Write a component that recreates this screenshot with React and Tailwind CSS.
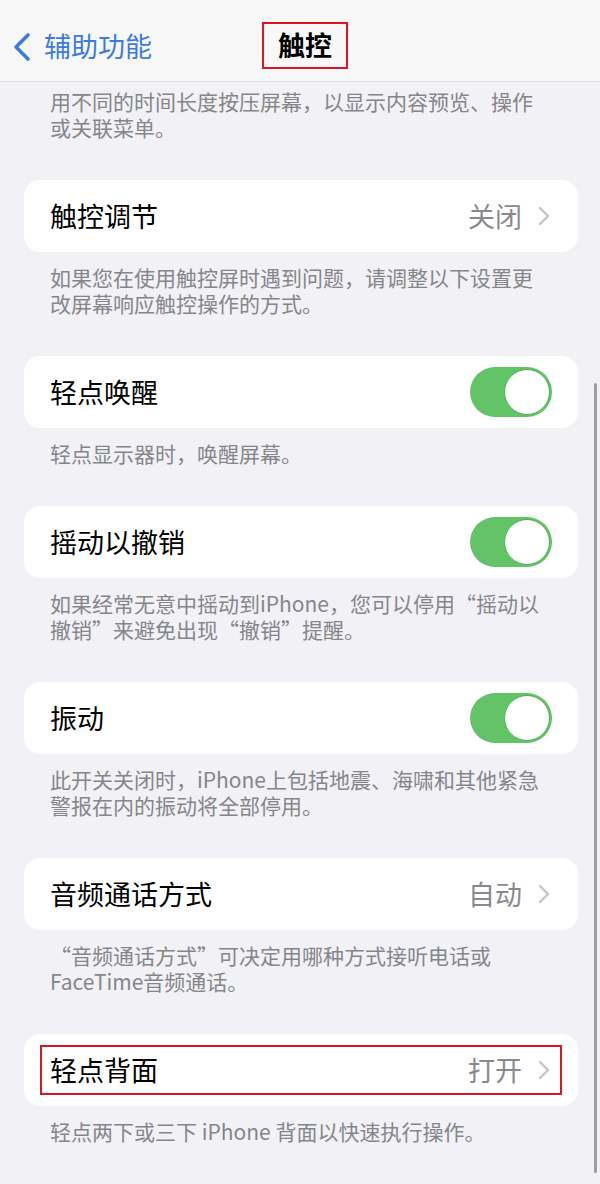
import React from "react";

const font = { fontFamily: '"Noto Sans CJK SC", "Noto Sans", sans-serif' };

const Toggle = () => (
  <div className="w-[82px] h-[50px] rounded-full bg-[#62c466] p-[2px] flex justify-end">
    <div className="w-[46px] h-[46px] rounded-full bg-white border border-[#4fae55]" />
  </div>
);

const Chevron = () => (
  <svg width="12" height="20" viewBox="0 0 12 20" className="ml-[16px]">
    <path d="M2 2 L10 10 L2 18" fill="none" stroke="#c5c5c8" strokeWidth="2.4" strokeLinecap="round" strokeLinejoin="round" />
  </svg>
);

const Card = ({ label, value, toggle, boxed }) => (
  <div className="mx-[24px] mr-[22px] h-[72px] rounded-[16px] bg-white flex items-center px-[16px]">
    <div
      className={
        "flex-1 h-[50px] flex items-center pl-[8px] pr-[10px] border-2 " +
        (boxed ? "border-[#e0141e]" : "border-transparent")
      }
    >
      <span className="flex-1 text-[27px] text-black">{label}</span>
      {toggle ? (
        <div className="-mr-[2px]">
          <Toggle />
        </div>
      ) : (
        <>
          <span className="text-[27px] text-[#8a8a8e]">{value}</span>
          <Chevron />
        </>
      )}
    </div>
  </div>
);

const Note = ({ children, first }) => (
  <p
    className={
      "pl-[50px] pr-[50px] pb-[40px] text-[21px] leading-[26px] text-[#86868a] " +
      (first ? "pt-[6px]" : "pt-[12px]")
    }
  >
    {children}
  </p>
);

export default function App() {
  return (
    <div className="relative w-[600px] h-[1184px] overflow-hidden bg-[#f1f1f6]" style={font}>
      {/* nav bar */}
      <div className="h-[82px] bg-[#f8f8f9] border-b border-[#dcdcdf] flex items-center relative">
        <div className="flex items-center pl-[12px] pt-[12px]">
          <svg width="20" height="30" viewBox="0 0 20 30">
            <path d="M16 3 L4 15 L16 27" fill="none" stroke="#3b7be3" strokeWidth="3.6" strokeLinecap="round" strokeLinejoin="round" />
          </svg>
          <span className="ml-[12px] text-[27px] text-[#3b7be3]">辅助功能</span>
        </div>
        <div className="absolute left-[262px] top-[22px] w-[86px] h-[47px] border-2 border-[#e0141e] flex items-center justify-center">
          <span className="text-[27px] font-bold text-black">触控</span>
        </div>
      </div>

      <div>
        <Note first>用不同的时间长度按压屏幕，以显示内容预览、操作或关联菜单。</Note>

        <Card label="触控调节" value="关闭" />
        <Note>如果您在使用触控屏时遇到问题，请调整以下设置更改屏幕响应触控操作的方式。</Note>

        <Card label="轻点唤醒" toggle />
        <Note>轻点显示器时，唤醒屏幕。</Note>

        <Card label="摇动以撤销" toggle />
        <Note>如果经常无意中摇动到iPhone，您可以停用“摇动以撤销”来避免出现“撤销”提醒。</Note>

        <Card label="振动" toggle />
        <Note>此开关关闭时，iPhone上包括地震、海啸和其他紧急警报在内的振动将全部停用。</Note>

        <Card label="音频通话方式" value="自动" />
        <Note>“音频通话方式”可决定用哪种方式接听电话或FaceTime音频通话。</Note>

        <Card label="轻点背面" value="打开" boxed />
        <Note>轻点两下或三下 iPhone 背面以快速执行操作。</Note>
      </div>

      {/* scroll indicator */}
      <div className="absolute right-[3px] top-[383px] w-[3px] h-[790px] rounded-full bg-[#9d9da1]" />
    </div>
  );
}
